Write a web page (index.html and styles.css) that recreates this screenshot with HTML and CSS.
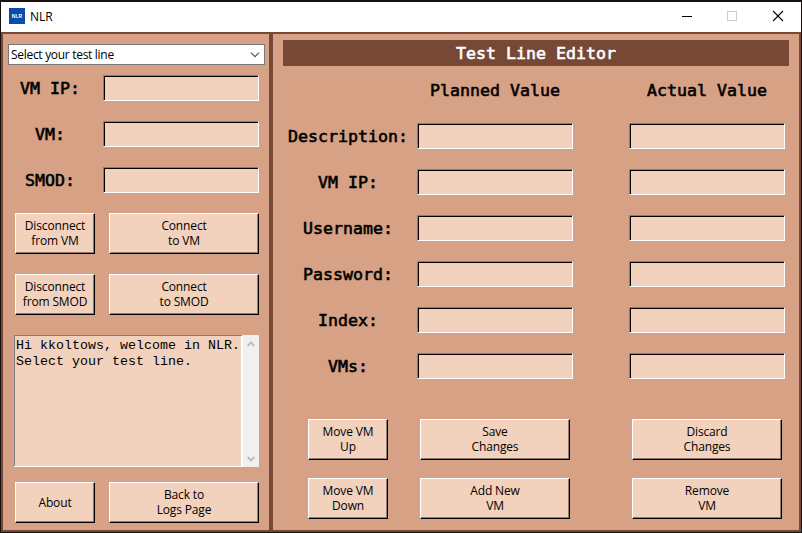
FILE: index.html
```html
<!DOCTYPE html>
<html lang="en">
<head>
<meta charset="utf-8">
<title>NLR</title>
<link rel="stylesheet" href="styles.css">
</head>
<body>
<div class="window">
  <header class="titlebar">
    <div class="app-icon">NLR</div>
    <span class="app-name">NLR</span>
    <svg class="controls" width="104" height="12" viewBox="0 0 104 12" fill="none">
      <path d="M0 6.5H10" stroke="#000"/>
      <rect x="45.500" y="1.500" width="9" height="9" stroke="#ccc"/>
      <path d="M91 1L101 11M101 1L91 11" stroke="#000" stroke-width="1.100"/>
    </svg>
  </header>
  <main class="panels">
    <section class="connect">
      <div class="select"><span>Select your test line</span>
        <svg width="10" height="6" viewBox="0 0 10 6" fill="none"><path d="M1 .7L5 4.700L9 .7" stroke="#555" stroke-width="1.200"/></svg>
      </div>
      <div class="fields">
        <label class="label">VM IP:</label><div class="input"></div>
        <label class="label">VM:</label><div class="input"></div>
        <label class="label">SMOD:</label><div class="input"></div>
      </div>
      <div class="actions">
        <button>Disconnect<br>from VM</button><button>Connect<br>to VM</button>
        <button>Disconnect<br>from SMOD</button><button>Connect<br>to SMOD</button>
      </div>
      <div class="log">
        <div class="log-text">Hi kkoltows, welcome in NLR.<br>Select your test line.</div>
        <div class="scrollbar">
          <svg width="8" height="6" viewBox="0 0 8 6" fill="none"><path d="M.7 5L4 1.500L7.300 5" stroke="#bfbfbf" stroke-width="1.900"/></svg>
          <svg width="8" height="6" viewBox="0 0 8 6" fill="none"><path d="M.7 1L4 4.500L7.300 1" stroke="#bfbfbf" stroke-width="1.900"/></svg>
        </div>
      </div>
      <div class="actions bottom"><button class="single">About</button><button>Back to<br>Logs Page</button></div>
    </section>
    <section class="editor">
      <h1 class="label">Test Line Editor</h1>
      <div class="values">
        <span></span><span class="label">Planned Value</span><span class="label">Actual Value</span>
        <label class="label">Description:</label><div class="input"></div><div class="input"></div>
        <label class="label">VM IP:</label><div class="input"></div><div class="input"></div>
        <label class="label">Username:</label><div class="input"></div><div class="input"></div>
        <label class="label">Password:</label><div class="input"></div><div class="input"></div>
        <label class="label">Index:</label><div class="input"></div><div class="input"></div>
        <label class="label">VMs:</label><div class="input"></div><div class="input"></div>
      </div>
      <div class="edit-actions">
        <button>Move VM<br>Up</button><button>Save<br>Changes</button><button>Discard<br>Changes</button>
        <button>Move VM<br>Down</button><button>Add New<br>VM</button><button>Remove<br>VM</button>
      </div>
    </section>
  </main>
</div>
</body>
</html>
```
FILE: styles.css
```css
* { box-sizing: border-box; }
body {
  margin: 0;
  height: 533px;
  padding: 2px 1px 1px;
  overflow: hidden;
  background: #17100f;
  color: #000;
  font: 12px/15px "Open Sans", "Noto Sans", sans-serif;
}
.window { width: 800px; height: 530px; background: #784836; }
.titlebar {
  display: flex;
  align-items: center;
  height: 30px;
  padding: 0 15px 2px 8px;
  background: #fff;
}
.app-icon {
  width: 16px;
  height: 16px;
  background: #0a4bab;
  color: #fff;
  font: bold 5px/16px "Liberation Sans", sans-serif;
  text-align: center;
}
.app-name { margin-left: 5px; }
.controls { margin-left: auto; }
.panels {
  display: grid;
  grid-template-columns: 266px 526px;
  column-gap: 4px;
  height: 500px;
  padding: 2px;
}
.connect, .editor { height: 496px; background: #d6a184; }
.connect { padding-top: 10px; }
.select {
  display: flex;
  align-items: center;
  justify-content: space-between;
  width: 257px;
  height: 21px;
  margin-left: 5px;
  padding: 0 4px 0 2px;
  border: 1px solid #7a7a7a;
  background: #fff;
}
.select span { letter-spacing: -0.3px; }
.label {
  padding-top: 2px;
  font: 16.6px/20px "DejaVu Sans Mono", monospace;
  text-align: center;
  white-space: pre;
  -webkit-text-stroke: 0.6px currentColor;
}
.input {
  width: 156px;
  height: 26px;
  border: 1px solid;
  border-color: #808080 #fff #fff #808080;
  box-shadow: inset 1px 1px #000;
  background: #f2d2bd;
}
.fields {
  display: grid;
  grid-template-columns: 94px 156px;
  row-gap: 20px;
  align-items: center;
  margin: 10px 0 0 6px;
}
.fields .label { width: 82px; }
button {
  height: 41px;
  padding: 0 0 2px;
  border: 1px solid;
  border-color: #fff #000 #000 #fff;
  border-radius: 0;
  box-shadow: inset -1px -1px #8c7b70;
  background: #f2d2bd;
  color: #000;
  font: inherit;
  letter-spacing: -0.15px;
}
.single { padding: 0; }
.actions {
  display: grid;
  grid-template-columns: 80px 150px;
  gap: 20px 14px;
  margin: 20px 0 0 12px;
}
.log {
  display: flex;
  width: 245px;
  height: 132px;
  margin: 20px 0 0 11px;
  border-bottom: 1px solid #fff;
  background: #f2d2bd;
}
.log-text {
  flex: 1;
  padding: 2px 0 0 1px;
  border: solid;
  border-width: 1px 2px 0 1px;
  border-color: #808080 #fff #fff #808080;
  font: 13.33px/16px "Liberation Mono", monospace;
  white-space: nowrap;
}
.scrollbar {
  display: flex;
  flex-direction: column;
  justify-content: space-between;
  align-items: center;
  width: 16px;
  height: 132px;
  padding: 6px 0 5px;
  background: #f0f0f0;
}
.actions.bottom { margin-top: 15px; }
.editor { padding: 6px 10px 0; }
h1.label {
  height: 26px;
  margin: 0;
  padding-top: 1px;
  background: #784836;
  color: #fff;
  line-height: 25px;
}
.values {
  display: grid;
  grid-template-columns: 134px 212px 156px;
  grid-template-rows: 23px repeat(6, 26px);
  row-gap: 20px;
  align-items: center;
  margin-top: 14px;
}
.values .label { width: 130px; }
.values span.label { align-self: start; width: 156px; padding-top: 1px; }
.edit-actions {
  display: grid;
  grid-template-columns: 80px 150px 150px;
  column-gap: 32px;
  row-gap: 18px;
  margin: 40px 0 0 25px;
}
.edit-actions button:nth-child(3n) { width: 150px; margin-left: 30px; }
```
